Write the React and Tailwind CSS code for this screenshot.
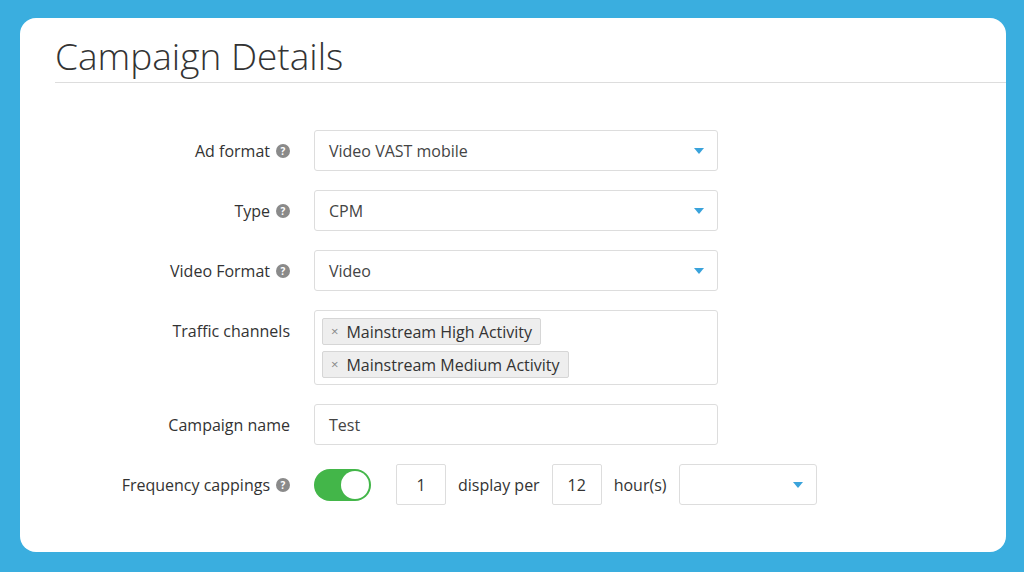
import React from "react";

const Q = () => (
  <span className="inline-flex w-[14px] h-[14px] rounded-full bg-[#8a8a8a] text-white text-[10px] font-bold items-center justify-center ml-[6px] leading-none">?</span>
);
const Arrow = () => (
  <svg width="10" height="6" viewBox="0 0 10 6"><path d="M0 0h10L5 6z" fill="#3aa3db" /></svg>
);
const Label = ({ children, q }) => (
  <div className="w-[270px] shrink-0 flex items-center justify-end text-[16px] text-[#333]">
    {children}{q && <Q />}
  </div>
);
const Select = ({ value }) => (
  <div className="w-[404px] h-[41px] border border-[#ddd] rounded-[3px] flex items-center justify-between pl-[14px] pr-[13px] text-[16px] text-[#444]">
    <span>{value}</span><Arrow />
  </div>
);
const Tag = ({ t }) => (
  <div className="h-[27px] bg-[#eee] border border-[#d6d6d6] rounded-[2px] flex items-center px-[8px] text-[16px] text-[#333] self-start">
    <span className="text-[#888] text-[13px] mr-[8px]">×</span>{t}
  </div>
);

export default function App() {
  return (
    <div className="w-[1024px] h-[572px] bg-[#3aaedf] p-[18px_18px_20px_20px]" style={{ fontFamily: '"Open Sans", sans-serif' }}>
      <div className="bg-white rounded-[16px] h-full pl-[35px] pt-[14px]">
        <div className="text-[37px] font-light text-[#333] leading-[48px] pb-[2px] border-b border-[#ddd]">Campaign Details</div>
        <div className="flex flex-col pt-[47px]">
          <div className="flex items-center gap-[24px] -ml-[35px]"><Label q>Ad format</Label><Select value="Video VAST mobile" /></div>
          <div className="flex items-center gap-[24px] -ml-[35px] mt-[19px]"><Label q>Type</Label><Select value="CPM" /></div>
          <div className="flex items-center gap-[24px] -ml-[35px] mt-[19px]"><Label q>Video Format</Label><Select value="Video" /></div>
          <div className="flex items-start gap-[24px] -ml-[35px] mt-[19px]">
            <div className="w-[270px] shrink-0 text-right text-[16px] text-[#333] pt-[9px]">Traffic channels</div>
            <div className="w-[404px] h-[75px] border border-[#ddd] rounded-[3px] flex flex-col gap-[6px] pl-[7px] pt-[7px]">
              <Tag t="Mainstream High Activity" /><Tag t="Mainstream Medium Activity" />
            </div>
          </div>
          <div className="flex items-center gap-[24px] -ml-[35px] mt-[19px]">
            <Label>Campaign name</Label>
            <div className="w-[404px] h-[41px] border border-[#ddd] rounded-[3px] flex items-center pl-[14px] text-[16px] text-[#444]">Test</div>
          </div>
          <div className="flex items-center -ml-[35px] mt-[19px] text-[16px] text-[#333]">
            <Label q>Frequency cappings</Label>
            <div className="ml-[24px] w-[57px] h-[32px] rounded-full bg-[#43b649] flex items-center justify-end pr-[2px]">
              <div className="w-[28px] h-[28px] rounded-full bg-white" />
            </div>
            <div className="ml-[25px] w-[50px] h-[41px] border border-[#ddd] rounded-[2px] flex items-center justify-center">1</div>
            <span className="ml-[12px]">display per</span>
            <div className="ml-[12px] w-[50px] h-[41px] border border-[#ddd] rounded-[2px] flex items-center justify-center">12</div>
            <span className="ml-[12px]">hour(s)</span>
            <div className="ml-[12px] w-[138px] h-[41px] border border-[#ddd] rounded-[3px] flex items-center justify-end pr-[13px]"><Arrow /></div>
          </div>
        </div>
      </div>
    </div>
  );
}
